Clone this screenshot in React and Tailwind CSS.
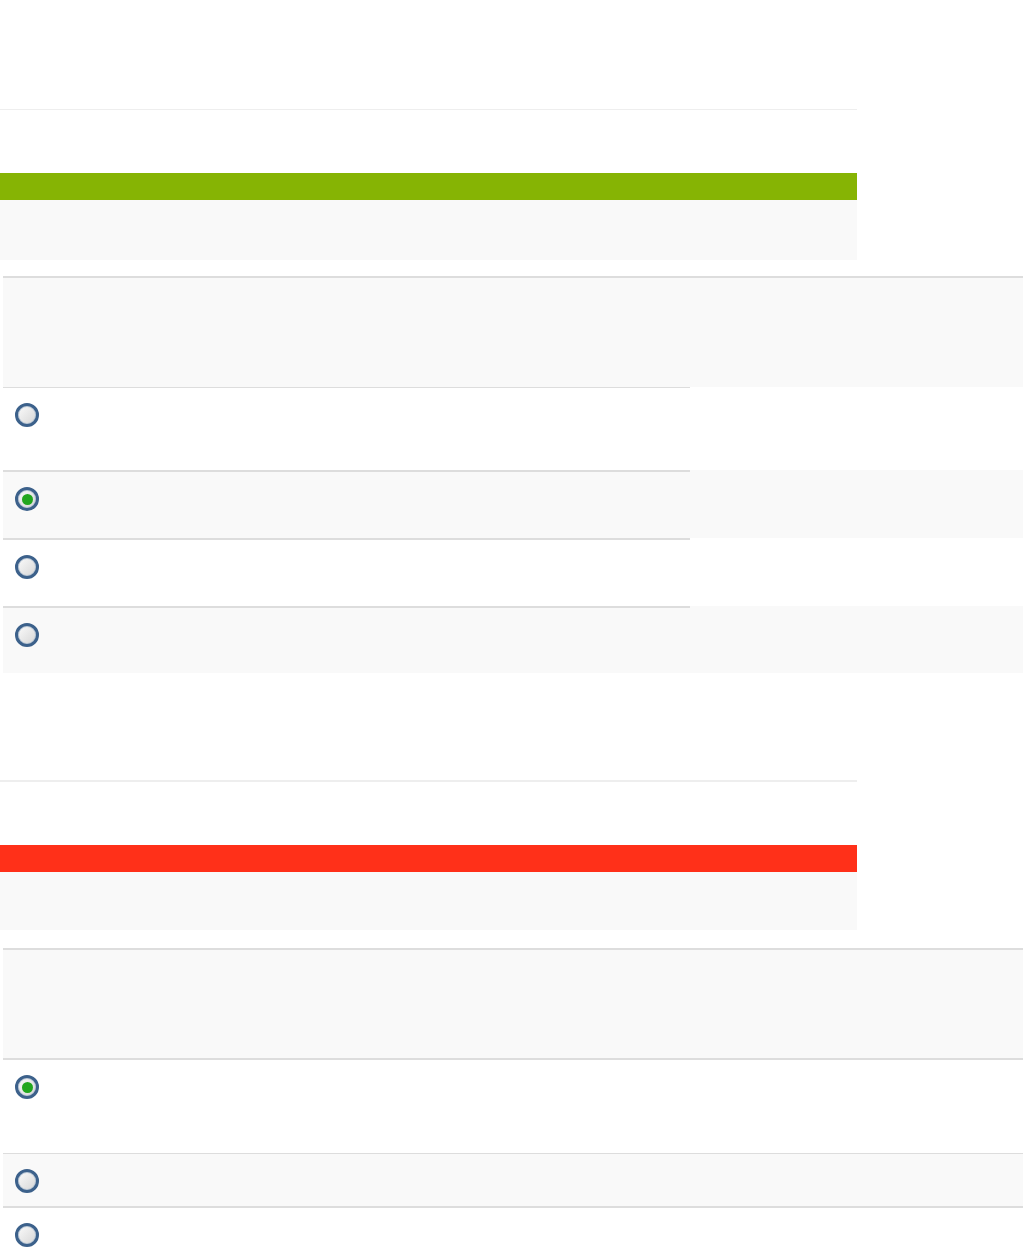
import React from "react";

const Radio = ({ checked }) => (
  <span className="flex h-6 w-6 items-center justify-center rounded-full border-[3px] border-[#3c618b] bg-linear-to-br from-[#fbfbfb] to-[#d6d6d6] shadow-[inset_0_0_0_1px_#b9c7d6]">
    {checked ? <span className="h-[11px] w-[11px] rounded-full bg-[#22a61e]" /> : null}
  </span>
);

// first table: row lines only under the first column (heights include the line)
const rowsA = [
  { h: "h-[83px]", bg: "bg-white", line: "border-t", checked: false },
  { h: "h-[68px]", bg: "bg-[#f9f9f9]", line: "border-t-2", checked: true },
  { h: "h-[68px]", bg: "bg-white", line: "border-t-2", checked: false },
  { h: "h-[67px]", bg: "bg-[#f9f9f9]", line: "border-t-2", checked: false },
];

const rowsB = [
  { h: "h-[95px]", bg: "bg-white", line: "border-t-2", checked: true },
  { h: "h-[53px]", bg: "bg-[#f9f9f9]", line: "border-t", checked: false },
  { h: "h-[42px]", bg: "bg-white", line: "border-t-2", checked: false },
];

const Section = ({ barColor, boxH, gap, hr }) => (
  <div>
    <div className={`w-[857px] bg-[#eeeeee] ${hr}`} />
    <div className="h-[63px]" />
    <div className={`h-[27px] w-[857px] ${barColor}`} />
    <div className={`w-[857px] bg-[#f9f9f9] ${boxH}`} />
    <div className={gap} />
  </div>
);

export default function App() {
  return (
    <div className="min-h-[1248px] w-[1024px] bg-white font-['Liberation_Sans',sans-serif]">
      <div className="h-[109px]" />
      <Section barColor="bg-[#86b404]" boxH="h-[60px]" gap="h-[16px]" hr="h-px" />

      <div className="ml-[3px] w-[1020px]">
        <div className="h-[111px] border-t-2 border-[#dddddd] bg-[#f9f9f9]" />
        {rowsA.map((r, i) => (
          <div key={i} className={`flex ${r.bg}`}>
            <div className={`w-[687px] border-[#dddddd] pl-3 pt-[15px] ${r.line} ${r.h}`}>
              <Radio checked={r.checked} />
            </div>
            <div className="flex-1" />
          </div>
        ))}
      </div>

      <div className="h-[107px]" />
      <Section barColor="bg-[#ff3019]" boxH="h-[58px]" gap="h-[18px]" hr="h-[2px]" />

      <div className="ml-[3px] w-[1020px]">
        <div className="h-[110px] border-t-2 border-[#dddddd] bg-[#f9f9f9]" />
        {rowsB.map((r, i) => (
          <div key={i} className={`border-[#dddddd] pl-3 pt-[15px] ${r.bg} ${r.line} ${r.h}`}>
            <Radio checked={r.checked} />
          </div>
        ))}
      </div>
    </div>
  );
}
